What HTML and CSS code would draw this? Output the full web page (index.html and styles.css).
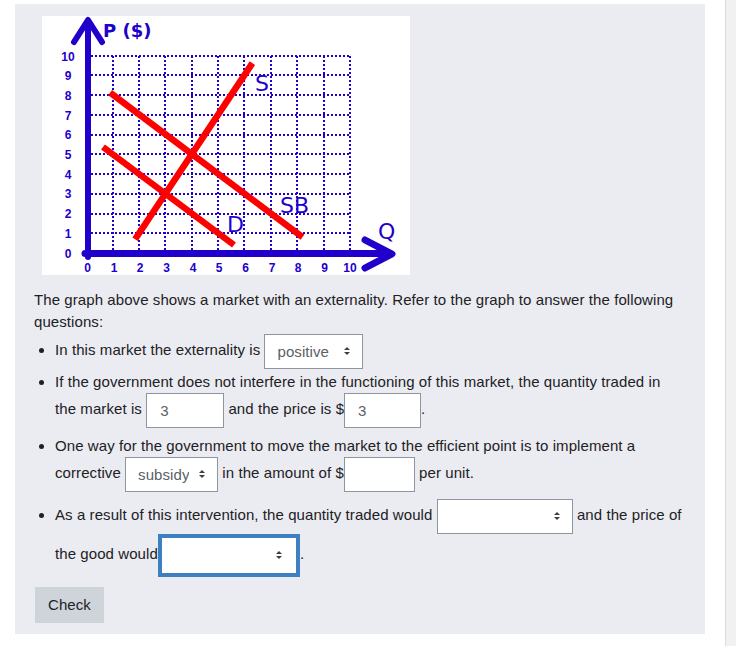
FILE: index.html
```html
<!DOCTYPE html>
<html lang="en">
<head>
<meta charset="utf-8">
<title>Market with an externality</title>
<link rel="stylesheet" href="styles.css">
</head>
<body>
<div class="page">
  <div class="panel">
    <svg class="graph" width="368" height="259" viewBox="0 0 368 259" xmlns="http://www.w3.org/2000/svg">
      <rect width="368" height="259" fill="#fff"/>
      <g stroke="#2200cc" stroke-width="2" stroke-dasharray="2 2" fill="none">
        <path d="M49 40H309M49 59H309M49 79H309M49 99H309M49 119H309M49 138H309M49 158H309M49 178H309M49 198H309M49 217H309"/>
        <path d="M71 40V234M97 40V234M123 40V234M150 40V234M176 40V234M202 40V234M229 40V234M255 40V234M282 40V234M308 40V234"/>
      </g>
      <g stroke="#2200cc" fill="none" stroke-linecap="round" stroke-linejoin="round">
        <path d="M46 241V6" stroke-width="6"/>
        <path d="M32 26L46 4L60 26" stroke-width="6"/>
        <path d="M43 237.5H348" stroke-width="7"/>
        <path d="M323 224L350 238L323 252" stroke-width="7"/>
      </g>
      <g stroke="#ff0000" stroke-width="6.5" fill="none">
        <path d="M68.1 76.6L260.5 221.2"/>
        <path d="M61 131L192 229"/>
        <path d="M93.1 223.2L210.4 47.1"/>
      </g>
      <g class="tick" fill="#2200cc" text-anchor="middle">
        <text x="26" y="44.5">10</text>
        <text x="26" y="64">9</text>
        <text x="26" y="83.5">8</text>
        <text x="26" y="103.5">7</text>
        <text x="26" y="123">6</text>
        <text x="26" y="142.5">5</text>
        <text x="26" y="162.5">4</text>
        <text x="26" y="182">3</text>
        <text x="26" y="202">2</text>
        <text x="26" y="221.5">1</text>
        <text x="26" y="241.5">0</text>
        <text x="45.5" y="256">0</text>
        <text x="72" y="256">1</text>
        <text x="98" y="256">2</text>
        <text x="124.5" y="256">3</text>
        <text x="151" y="256">4</text>
        <text x="177" y="256">5</text>
        <text x="203.5" y="256">6</text>
        <text x="230" y="256">7</text>
        <text x="256" y="256">8</text>
        <text x="282.5" y="256">9</text>
        <text x="308" y="256">10</text>
      </g>
      <text class="axis-title" x="61" y="21" fill="#2200cc">P ($)</text>
      <g class="curve-label" fill="#2200cc">
        <text x="213" y="75">S</text>
        <text x="238" y="197">SB</text>
        <text x="185" y="216">D</text>
        <text x="336" y="223">Q</text>
      </g>
    </svg>

    <p class="intro">The graph above shows a market with an externality. Refer to the graph to answer the following questions:</p>

    <ul class="questions">
      <li class="q q-first">In this market the externality is <span class="select-wrap"><select class="field sel-positive"><option>positive</option></select></span></li>
      <li class="q">If the government does not interfere in the functioning of this market, the quantity traded in<br>the market is <input class="field in-qty" type="text" value="3"> and the price is $<input class="field in-price" type="text" value="3">.</li>
      <li class="q">One way for the government to move the market to the efficient point is to implement a<br>corrective <span class="select-wrap"><select class="field sel-subsidy"><option>subsidy</option></select></span> in the amount of $<input class="field in-amount" type="text" value=""> per unit.</li>
      <li class="q">As a result of this intervention, the quantity traded would <span class="select-wrap"><select class="field sel-qty"><option></option></select></span> and the price of<br>the good would<span class="select-wrap focus-wrap"><select class="field sel-price focused"><option></option></select></span>.</li>
    </ul>

    <button class="check" type="button">Check</button>
  </div>
</div>
<div class="scrollbar"></div>
</body>
</html>
```

FILE: styles.css
```css
html, body {
  margin: 0;
  padding: 0;
  background: #ffffff;
}

body {
  display: flex;
  width: 736px;
  height: 646px;
  overflow: hidden;
  font-family: "Liberation Sans", Arial, sans-serif;
  font-size: 15px;
  letter-spacing: 0.08px;
  line-height: 22px;
  color: #1d2125;
}

.page {
  flex: 1;
}

.panel {
  margin: 4px 20px 0 15px;
  padding: 12px 19px 11px 19px;
  background: #ebecf1;
}

.graph {
  display: block;
  margin: 0 0 14px 8px;
  letter-spacing: 0;
}

.tick {
  font-family: "Liberation Sans", Arial, sans-serif;
  font-weight: bold;
  font-size: 12px;
}

.axis-title {
  font-family: "DejaVu Sans", sans-serif;
  font-weight: bold;
  font-size: 18px;
}

.curve-label {
  font-family: "DejaVu Sans", sans-serif;
  font-size: 22px;
}

.intro {
  margin: 0;
}

.questions {
  margin: 1px 0 10px 0;
  padding: 0 0 0 21px;
}

.q {
  margin-bottom: 7px;
}

.q-first {
  margin-bottom: 2px;
}

.field {
  box-sizing: border-box;
  height: 35px;
  margin: 0;
  border: 1px solid #8f959e;
  border-radius: 0;
  background: #ffffff;
  font-family: "Liberation Sans", Arial, sans-serif;
  font-size: 15px;
  letter-spacing: 0.08px;
  color: #5b6168;
  vertical-align: middle;
  padding: 0 12px;
  outline: none;
}

input.field {
  padding: 0 13px;
}

select.field {
  -webkit-appearance: none;
  appearance: none;
  padding: 0 28px 0 12px;
}

.select-wrap {
  position: relative;
  display: inline-block;
  vertical-align: middle;
}

.select-wrap select {
  display: block;
}

.select-wrap::before,
.select-wrap::after {
  content: "";
  position: absolute;
  right: 13px;
  width: 0;
  height: 0;
  border-left: 3.5px solid transparent;
  border-right: 3.5px solid transparent;
  pointer-events: none;
}

.select-wrap::before {
  top: 13px;
  border-bottom: 3.5px solid #3a3f44;
}

.select-wrap::after {
  top: 18px;
  border-top: 3.5px solid #3a3f44;
}

.focus-wrap::before {
  top: 17px;
  right: 18px;
}

.focus-wrap::after {
  top: 22px;
  right: 18px;
}

.sel-positive { width: 99px; }
.sel-subsidy { width: 93px; }
.sel-qty { width: 136px; }
.sel-price { width: 142px; }

.in-qty { width: 78px; }
.in-price { width: 77px; }
.in-amount { width: 71px; }

.focused {
  height: 43px;
  border: 4px solid #3d7fc1;
}

.check {
  display: block;
  margin: 0 0 0 1px;
  padding: 7px 13px;
  border: none;
  border-radius: 0;
  background: #ced4da;
  font-family: "Liberation Sans", Arial, sans-serif;
  font-size: 15px;
  letter-spacing: 0.08px;
  line-height: 22px;
  color: #1d2125;
}

.scrollbar {
  box-sizing: border-box;
  width: 11px;
  height: 646px;
  border-left: 1px solid #dcdcdc;
  background: #f1f1f1;
}
```
